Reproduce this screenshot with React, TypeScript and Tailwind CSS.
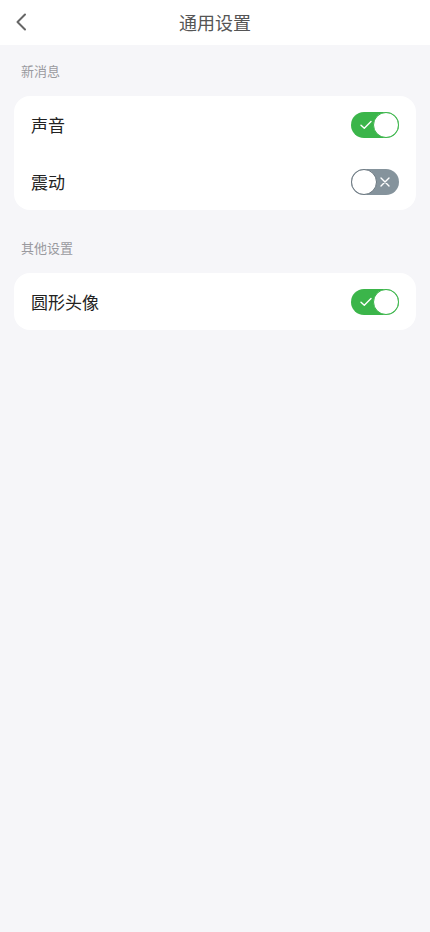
import React, { useState } from 'react';

const FONT = { fontFamily: '"Noto Sans CJK SC", "Noto Sans", sans-serif' };

interface IToggleProps {
  on: boolean;
  onChange: () => void;
}

const Toggle: React.FC<IToggleProps> = ({ on, onChange }) => {
  return (
    <button
      onClick={onChange}
      className={`relative w-[48px] h-[26px] rounded-full flex items-center ${
        on ? 'bg-[#3bb54a]' : 'bg-[#85939c]'
      }`}
    >
      {on ? (
        <svg className="absolute left-[9px] top-[8px]" width="12" height="10" viewBox="0 0 12 10" fill="none">
          <path d="M1 5.2 L4.3 8.2 L11 1.5" stroke="white" strokeWidth="1.4" strokeLinecap="round" strokeLinejoin="round" />
        </svg>
      ) : (
        <svg className="absolute right-[9px] top-[8px]" width="10" height="10" viewBox="0 0 10 10" fill="none">
          <path d="M1 1 L9 9 M9 1 L1 9" stroke="white" strokeWidth="1.4" strokeLinecap="round" />
        </svg>
      )}
      <span
        className={`absolute top-0 w-[26px] h-[26px] rounded-full bg-white border ${
          on ? 'right-0 border-[#3bb54a]' : 'left-0 border-[#6b7780]'
        }`}
      />
    </button>
  );
};

export default function App() {
  const [sound, setSound] = useState(true);
  const [vibrate, setVibrate] = useState(false);
  const [round, setRound] = useState(true);

  // Rows for each settings group
  const groups = [
    {
      title: '新消息',
      rows: [
        { label: '声音', on: sound, toggle: () => setSound(!sound) },
        { label: '震动', on: vibrate, toggle: () => setVibrate(!vibrate) },
      ],
    },
    {
      title: '其他设置',
      rows: [{ label: '圆形头像', on: round, toggle: () => setRound(!round) }],
    },
  ];

  return (
    <div className="min-h-[932px] bg-[#f6f6f9] flex flex-col" style={FONT}>
      <div className="h-[45px] bg-white flex items-center relative">
        <svg className="absolute left-[15px] top-[13px]" width="12" height="18" viewBox="0 0 12 18" fill="none">
          <path d="M10 1.5 L2.5 9 L10 16.5" stroke="#666" strokeWidth="2" strokeLinecap="round" strokeLinejoin="round" />
        </svg>
        <div className="flex-1 text-center text-[18px] text-[#555]">通用设置</div>
      </div>
      <div className="flex flex-col px-[14px]">
        {groups.map((g, i) => (
          <div key={i} className="flex flex-col">
            <div className="pl-[7px] pt-[17px] pb-[16px] text-[13px] leading-[18px] text-[#9a9a9f]">{g.title}</div>
            <div className="bg-white rounded-[16px] flex flex-col">
              {g.rows.map((r, j) => (
                <div key={j} className="h-[57px] flex items-center justify-between pl-[17px] pr-[17px]">
                  <span className="text-[17px] text-[#222]">{r.label}</span>
                  <Toggle on={r.on} onChange={r.toggle} />
                </div>
              ))}
            </div>
            {i === 0 && <div className="h-[12px]" />}
          </div>
        ))}
      </div>
    </div>
  );
}
